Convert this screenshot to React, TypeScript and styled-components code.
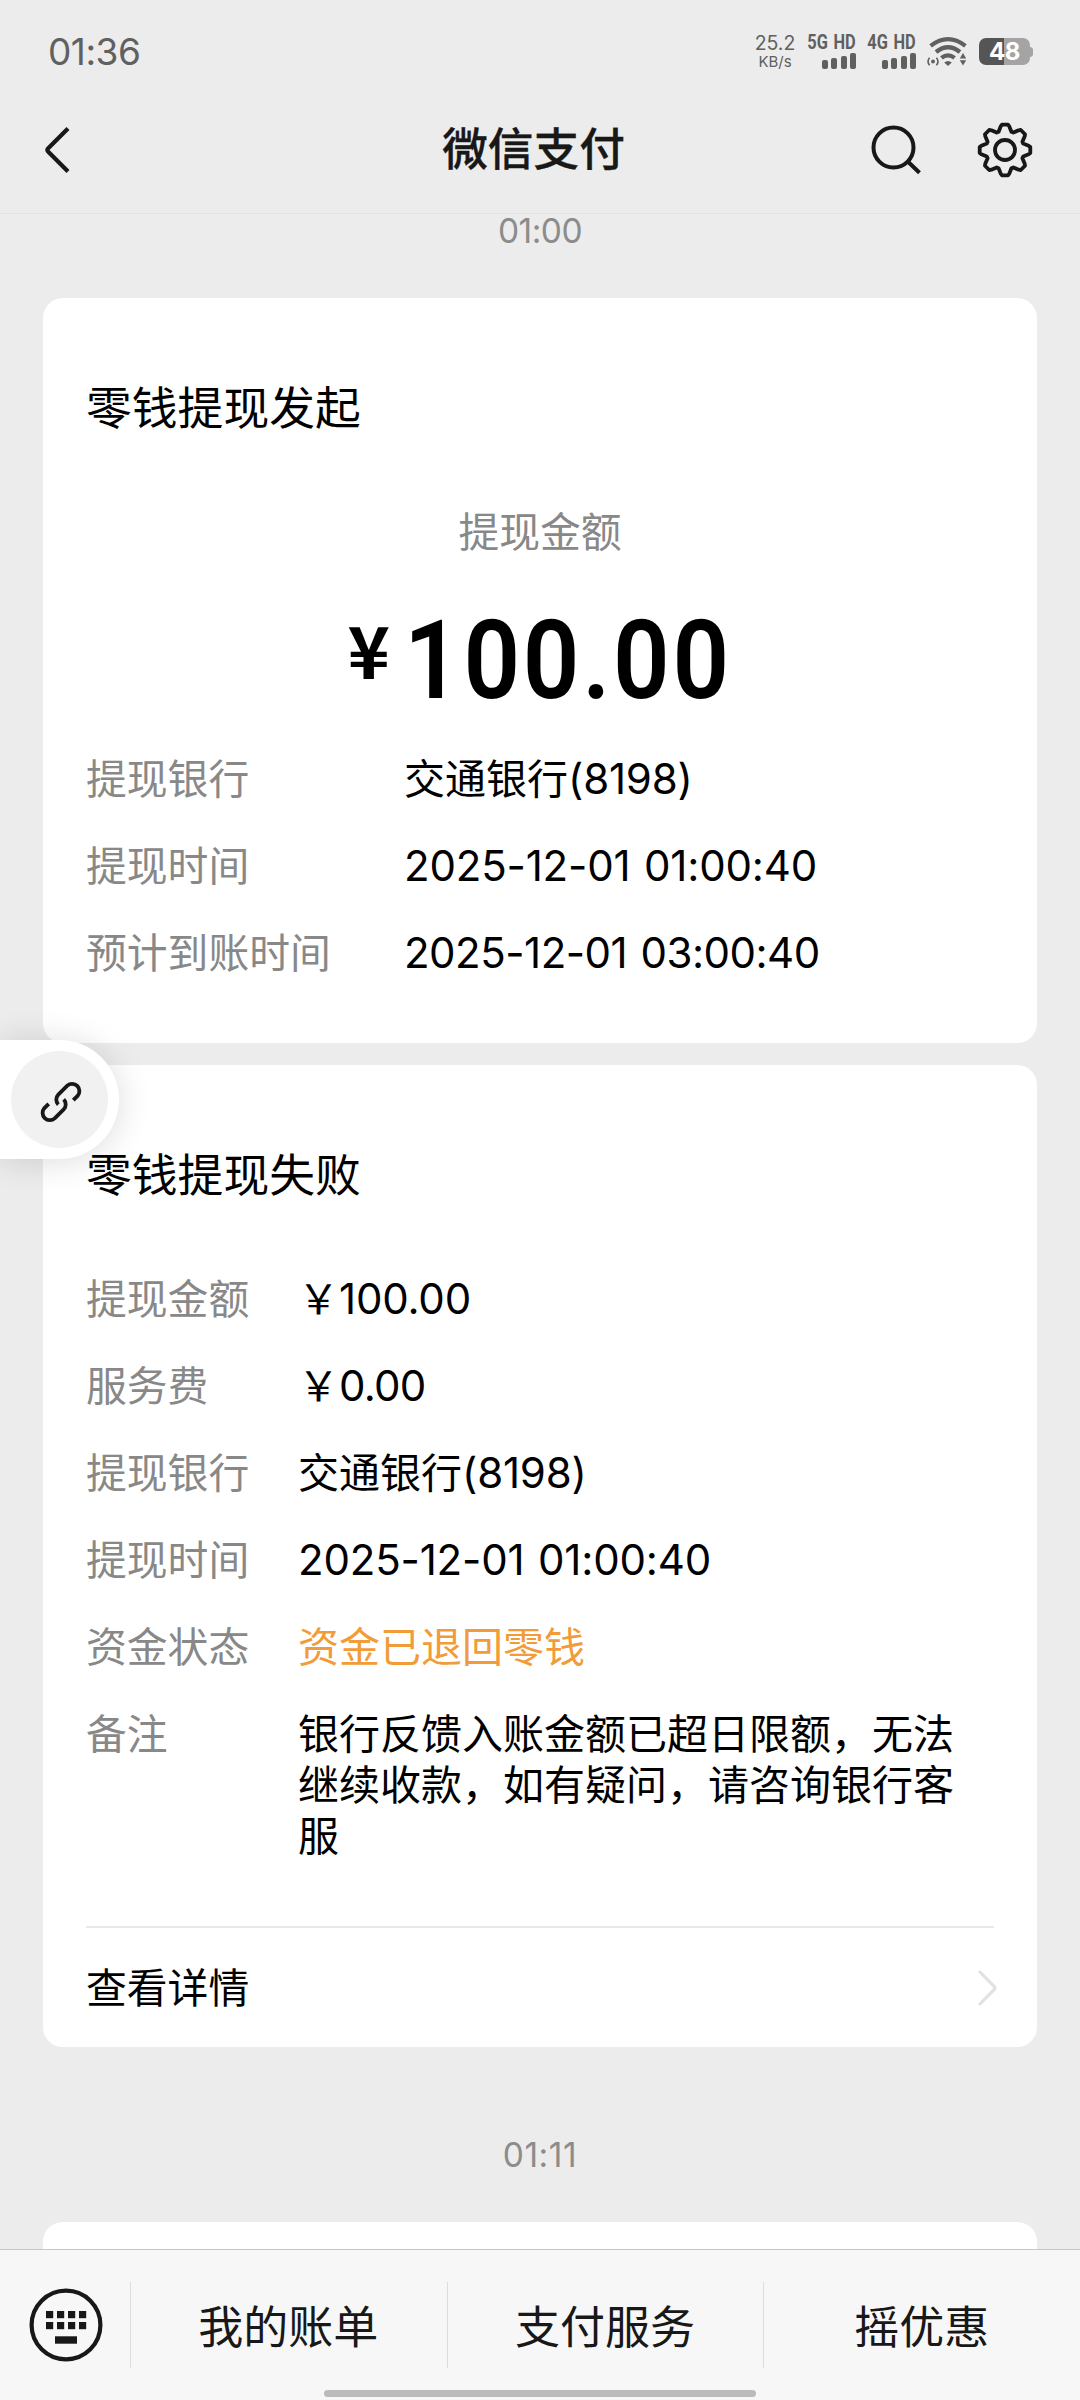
import React from "react";
import styled, { createGlobalStyle } from "styled-components";

const GlobalStyle = createGlobalStyle`
  * { box-sizing: border-box; }
  html, body { margin: 0; padding: 0; }
  body {
    background: #ececec;
    font-family: Inter, "Noto Sans CJK SC", sans-serif;
    color: #000;
  }
`;

const Screen = styled.div`
  width: 1080px;
  height: 2400px;
  display: flex;
  flex-direction: column;
  overflow: hidden;
  position: relative;
  background: #ececec;
`;

const StatusBar = styled.div`
  height: 100px;
  flex: none;
  display: flex;
  align-items: center;
  padding: 3px 47px 0 48px;
  color: #606060;
`;

const Clock = styled.div`
  font-size: 37px;
  line-height: 40px;
  letter-spacing: -0.5px;
  flex: 1;
`;

const NetSpeed = styled.div`
  display: flex;
  flex-direction: column;
  align-items: center;
  width: 42px;
  margin-right: 11px;
`;

const SpeedValue = styled.span`
  font-size: 19.5px;
  line-height: 19px;
`;

const SpeedUnit = styled.span`
  font-size: 15px;
  line-height: 17px;
`;

const Signal = styled.div`
  width: 49px;
  margin-right: 11px;
  display: flex;
  flex-direction: column;
  align-items: flex-end;
  gap: 2px;
`;

const SignalLabel = styled.span`
  font-family: Roboto, sans-serif;
  font-weight: 700;
  font-size: 19.5px;
  line-height: 16px;
  white-space: nowrap;
  word-spacing: 2px;
  transform: scaleX(0.84);
  transform-origin: right center;
`;

const Bars = styled.div`
  display: flex;
  align-items: flex-end;
  gap: 3.5px;
`;

const Bar = styled.i<{ $h: number }>`
  width: 6px;
  height: ${(p) => p.$h}px;
  border-radius: 2px;
  background: #606060;
`;

const Battery = styled.div`
  display: flex;
  align-items: center;
  margin-left: 12px;
`;

const BatteryBody = styled.div`
  width: 51px;
  height: 27px;
  border-radius: 7px;
  background: linear-gradient(90deg, #555 0 25px, #a4a4a4 25px);
  color: #fff;
  font-size: 24px;
  font-weight: 700;
  line-height: 28px;
  text-align: center;
  letter-spacing: -0.5px;
`;

const BatteryTip = styled.div`
  width: 3px;
  height: 10px;
  border-radius: 0 3px 3px 0;
  background: #a4a4a4;
`;

const NavBar = styled.header`
  height: 114px;
  flex: none;
  display: grid;
  grid-template-columns: 300px 1fr 300px;
  align-items: center;
  border-bottom: 1px solid #e3e3e3;
  padding: 0 47px 14px 43px;
`;

const NavTitle = styled.h1`
  margin: 0;
  font-size: 45.7px;
  font-weight: 500;
  line-height: 60px;
  text-align: center;
  color: #181818;
  padding: 1px 9px 0 0;
  -webkit-text-stroke: 0.3px #181818;
`;

const NavActions = styled.div`
  display: flex;
  justify-content: flex-end;
  align-items: center;
  gap: 56px;
`;

const Timestamp = styled.div<{ $h: number; $pt: number; $ls: number }>`
  height: ${(p) => p.$h}px;
  padding-top: ${(p) => p.$pt}px;
  flex: none;
  text-align: center;
  font-size: 33.5px;
  line-height: 34px;
  letter-spacing: ${(p) => p.$ls}px;
  color: #8c8c8c;
`;

const Card = styled.section<{ $h: number }>`
  height: ${(p) => p.$h}px;
  flex: none;
  display: flex;
  flex-direction: column;
  margin: 0 43px;
  padding: 0 43px;
  border-radius: 20px;
  background: #fff;
`;

const CardGap = styled.div`
  height: 22px;
  flex: none;
`;

const CardTitle = styled.h2`
  margin: 0;
  padding-top: 81px;
  font-size: 45.8px;
  font-weight: 400;
  line-height: 60px;
`;

const AmountCaption = styled.div`
  margin-top: 67px;
  text-align: center;
  font-size: 40.8px;
  line-height: 52px;
  color: #888;
`;

const Amount = styled.div`
  margin-top: 39px;
  height: 128px;
  display: flex;
  justify-content: center;
  align-items: flex-start;
  padding-right: 2px;
  font-family: Roboto, sans-serif;
  font-weight: 600;
  font-size: 109px;
  line-height: 128px;
`;

const AmountDigits = styled.span`
  transform: scaleX(0.91);
  transform-origin: left center;
  letter-spacing: 3px;
  margin-right: -34px;
`;

const Currency = styled.span`
  font-family: "Noto Sans CJK SC", sans-serif;
  font-weight: 700;
  font-size: 72px;
  line-height: 102px;
  margin-right: 14px;
`;

const Rows = styled.dl<{ $mt: number }>`
  margin: ${(p) => p.$mt}px 0 0;
  display: flex;
  flex-direction: column;
  gap: 35.5px;
`;

const Row = styled.div`
  display: flex;
`;

const Label = styled.dt<{ $w: number }>`
  width: ${(p) => p.$w}px;
  flex: none;
  font-size: 40.8px;
  line-height: 51.4px;
  color: #888;
`;

const Value = styled.dd<{ $color?: string }>`
  margin: 0;
  width: 664px;
  font-size: 41px;
  line-height: 51.4px;
  color: ${(p) => p.$color ?? "#000"};
`;

const Digits = styled.span<{ $ls?: number }>`
  font-size: 42px;
  line-height: 1;
  letter-spacing: ${(p) => p.$ls ?? -0.18}px;
  word-spacing: 2px;
`;

const Yen = styled.span`
  font-family: "Noto Sans CJK SC", sans-serif;
  line-height: 1;
`;

const DetailLink = styled.div`
  margin-top: auto;
  border-top: 2px solid #e8e8e8;
  height: 121px;
  display: flex;
  align-items: center;
  justify-content: space-between;
  font-size: 40.8px;
  line-height: 52px;
`;

const BottomBar = styled.nav`
  position: absolute;
  left: 0;
  right: 0;
  bottom: 0;
  height: 151px;
  background: #f7f7f7;
  border-top: 1px solid #c6c6c6;
  display: flex;
  flex-direction: column;
`;

const Menu = styled.div`
  height: 86px;
  margin-top: 32px;
  display: grid;
  grid-template-columns: 130px 1fr 1fr 1fr;
`;

const KeyboardCell = styled.div`
  display: flex;
  align-items: center;
  justify-content: center;
  padding-left: 1px;
`;

const MenuItem = styled.div`
  display: flex;
  align-items: center;
  justify-content: center;
  border-left: 1px solid #dcdcdc;
  padding: 5px 1px 0 0;
  font-size: 45px;
  line-height: 60px;
  color: #181818;
`;

const HomeIndicator = styled.div`
  width: 432px;
  height: 7px;
  margin: 22px auto 0;
  border-radius: 4px;
  background: #bbb;
`;

const FloatTab = styled.div`
  position: absolute;
  left: 0;
  top: 1040px;
  width: 119px;
  height: 119px;
  border-radius: 0 60px 60px 0;
  background: #fff;
  box-shadow: 0 2px 34px rgba(0, 0, 0, 0.14);
  padding: 11px;
`;

const FloatDisc = styled.div`
  width: 97px;
  height: 97px;
  border-radius: 50%;
  background: #f1f1f1;
  display: flex;
  align-items: center;
  justify-content: center;
  padding: 4px 0 0 2px;
`;

const gearPath = (() => {
  const tooth: [number, number][] = [
    [-6.4, -18.2],
    [-4.3, -23.6],
    [-3, -25.3],
    [3, -25.3],
    [4.3, -23.6],
    [6.4, -18.2],
  ];
  const pts: string[] = [];
  for (let i = 0; i < 8; i++) {
    const a = (i * Math.PI) / 4;
    tooth.forEach(([x, y]) => {
      const px = x * Math.cos(a) - y * Math.sin(a);
      const py = x * Math.sin(a) + y * Math.cos(a);
      pts.push(`${px.toFixed(2)} ${py.toFixed(2)}`);
    });
  }
  return `M${pts.join("L")}Z`;
})();

const BackIcon = () => (
  <svg width="28" height="48" viewBox="0 0 28 48" fill="none" stroke="#181818" strokeWidth="4.2" strokeLinejoin="round">
    <path d="M25 2.5 5 22.6Q3.6 24 5 25.4L25 45.5" />
  </svg>
);

const SearchIcon = () => (
  <svg width="50" height="50" viewBox="0 0 50 50" fill="none" stroke="#181818" strokeWidth="4">
    <circle cx="22.5" cy="22.5" r="20" />
    <path d="M37 36.8 48.5 47.8" />
  </svg>
);

const GearIcon = () => (
  <svg width="56" height="56" viewBox="-28 -28 56 56" fill="none" stroke="#181818" strokeWidth="3.8" strokeLinejoin="round">
    <path d={gearPath} />
    <circle r="10" />
  </svg>
);

const WifiIcon = () => (
  <svg width="40" height="30" viewBox="0 0 40 30" fill="none" stroke="#606060">
    <path d="M3.6 8.9Q21 -4.5 38.4 8.9" strokeWidth="4.2" />
    <path d="M9 15Q21 5.5 33 15" strokeWidth="4.2" />
    <path d="M14.4 20.8Q21 15.8 27.6 20.8" strokeWidth="4.2" />
    <path d="M17.2 25.5Q21 22.4 24.8 25.5L21 29Z" fill="#606060" stroke="none" />
    <circle cx="6" cy="24.5" r="1.9" fill="#606060" stroke="none" />
    <path d="M2.6 20.8Q-0.6 24.5 2.6 28.2M9.4 20.8Q12.6 24.5 9.4 28.2" strokeWidth="1.6" />
    <path d="M36 16 39.2 21.5H32.8ZM36 28.5 39.2 23.3H32.8Z" fill="#606060" stroke="none" />
  </svg>
);

const LinkIcon = () => (
  <svg width="42" height="42" viewBox="9.7 10.7 42 42" fill="none" stroke="#181818" strokeWidth="3.8">
    <path d="M43 29.9 47.3 25.6A7.3 7.3 0 0 0 37 15.3L28 24.3A7.2 7.2 0 0 0 28 34.3" />
    <path d="M18.4 33.5 14.1 37.8A7.3 7.3 0 0 0 24.4 48.1L33.4 39.1A7.2 7.2 0 0 0 33.4 29.1" />
  </svg>
);

const Chevron = styled.svg`
  margin-right: -3px;
`;

const ChevronIcon = () => (
  <Chevron width="20" height="38" viewBox="0 0 20 38" fill="none" stroke="#e2e2e2" strokeWidth="3.2">
    <path d="M2 2 17.5 17.8Q18.5 19 17.5 20.2L2 36" />
  </Chevron>
);

const KeyboardIcon = () => (
  <svg width="74" height="74" viewBox="-37 -37 74 74" fill="#181818">
    <circle r="34.4" fill="none" stroke="#181818" strokeWidth="4.2" />
    {[-20, -9, 2, 13].map((x) => (
      <React.Fragment key={x}>
        <rect x={x} y="-14" width="7.2" height="7.2" />
        <rect x={x} y="-3" width="7.2" height="7.2" />
      </React.Fragment>
    ))}
    <rect x="-11" y="11.3" width="22" height="7.4" />
  </svg>
);

const SignalStack = ({ label }: { label: string }) => (
  <Signal>
    <SignalLabel>{label}</SignalLabel>
    <Bars>
      {[9, 10.5, 13, 16].map((h) => (
        <Bar key={h} $h={h} />
      ))}
    </Bars>
  </Signal>
);

export default function App() {
  return (
    <>
      <GlobalStyle />
      <Screen>
        <StatusBar>
          <Clock>01:36</Clock>
          <NetSpeed>
            <SpeedValue>25.2</SpeedValue>
            <SpeedUnit>KB/s</SpeedUnit>
          </NetSpeed>
          <SignalStack label="5G HD" />
          <SignalStack label="4G HD" />
          <WifiIcon />
          <Battery>
            <BatteryBody>48</BatteryBody>
            <BatteryTip />
          </Battery>
        </StatusBar>
        <NavBar>
          <BackIcon />
          <NavTitle>微信支付</NavTitle>
          <NavActions>
            <SearchIcon />
            <GearIcon />
          </NavActions>
        </NavBar>

        <Timestamp $h={84} $pt={0} $ls={-0.5}>01:00</Timestamp>

        <Card $h={745}>
          <CardTitle>零钱提现发起</CardTitle>
          <AmountCaption>提现金额</AmountCaption>
          <Amount>
            <Currency>¥</Currency>
            <AmountDigits>100.00</AmountDigits>
          </Amount>
          <Rows $mt={29}>
            <Row>
              <Label $w={318}>提现银行</Label>
              <Value>交通银行<Digits>(8198)</Digits></Value>
            </Row>
            <Row>
              <Label $w={318}>提现时间</Label>
              <Value><Digits>2025-12-01 01:00:40</Digits></Value>
            </Row>
            <Row>
              <Label $w={318}>预计到账时间</Label>
              <Value><Digits $ls={-0.5}>2025-12-01 03:00:40</Digits></Value>
            </Row>
          </Rows>
        </Card>
        <CardGap />
        <Card $h={982}>
          <CardTitle>零钱提现失败</CardTitle>
          <Rows $mt={68}>
            <Row>
              <Label $w={212}>提现金额</Label>
              <Value><Yen>￥</Yen><Digits>100.00</Digits></Value>
            </Row>
            <Row>
              <Label $w={212}>服务费</Label>
              <Value><Yen>￥</Yen><Digits $ls={-0.7}>0.00</Digits></Value>
            </Row>
            <Row>
              <Label $w={212}>提现银行</Label>
              <Value>交通银行<Digits>(8198)</Digits></Value>
            </Row>
            <Row>
              <Label $w={212}>提现时间</Label>
              <Value><Digits>2025-12-01 01:00:40</Digits></Value>
            </Row>
            <Row>
              <Label $w={212}>资金状态</Label>
              <Value $color="#f19c38">资金已退回零钱</Value>
            </Row>
            <Row>
              <Label $w={212}>备注</Label>
              <Value>银行反馈入账金额已超日限额，无法继续收款，如有疑问，请咨询银行客服</Value>
            </Row>
          </Rows>
          <DetailLink>
            查看详情
            <ChevronIcon />
          </DetailLink>
        </Card>
        <Timestamp $h={175} $pt={91} $ls={0.6}>01:11</Timestamp>
        <Card $h={744} />

        <FloatTab>
          <FloatDisc>
            <LinkIcon />
          </FloatDisc>
        </FloatTab>

        <BottomBar>
          <Menu>
            <KeyboardCell>
              <KeyboardIcon />
            </KeyboardCell>
            <MenuItem>我的账单</MenuItem>
            <MenuItem>支付服务</MenuItem>
            <MenuItem>摇优惠</MenuItem>
          </Menu>
          <HomeIndicator />
        </BottomBar>
      </Screen>
    </>
  );
}
